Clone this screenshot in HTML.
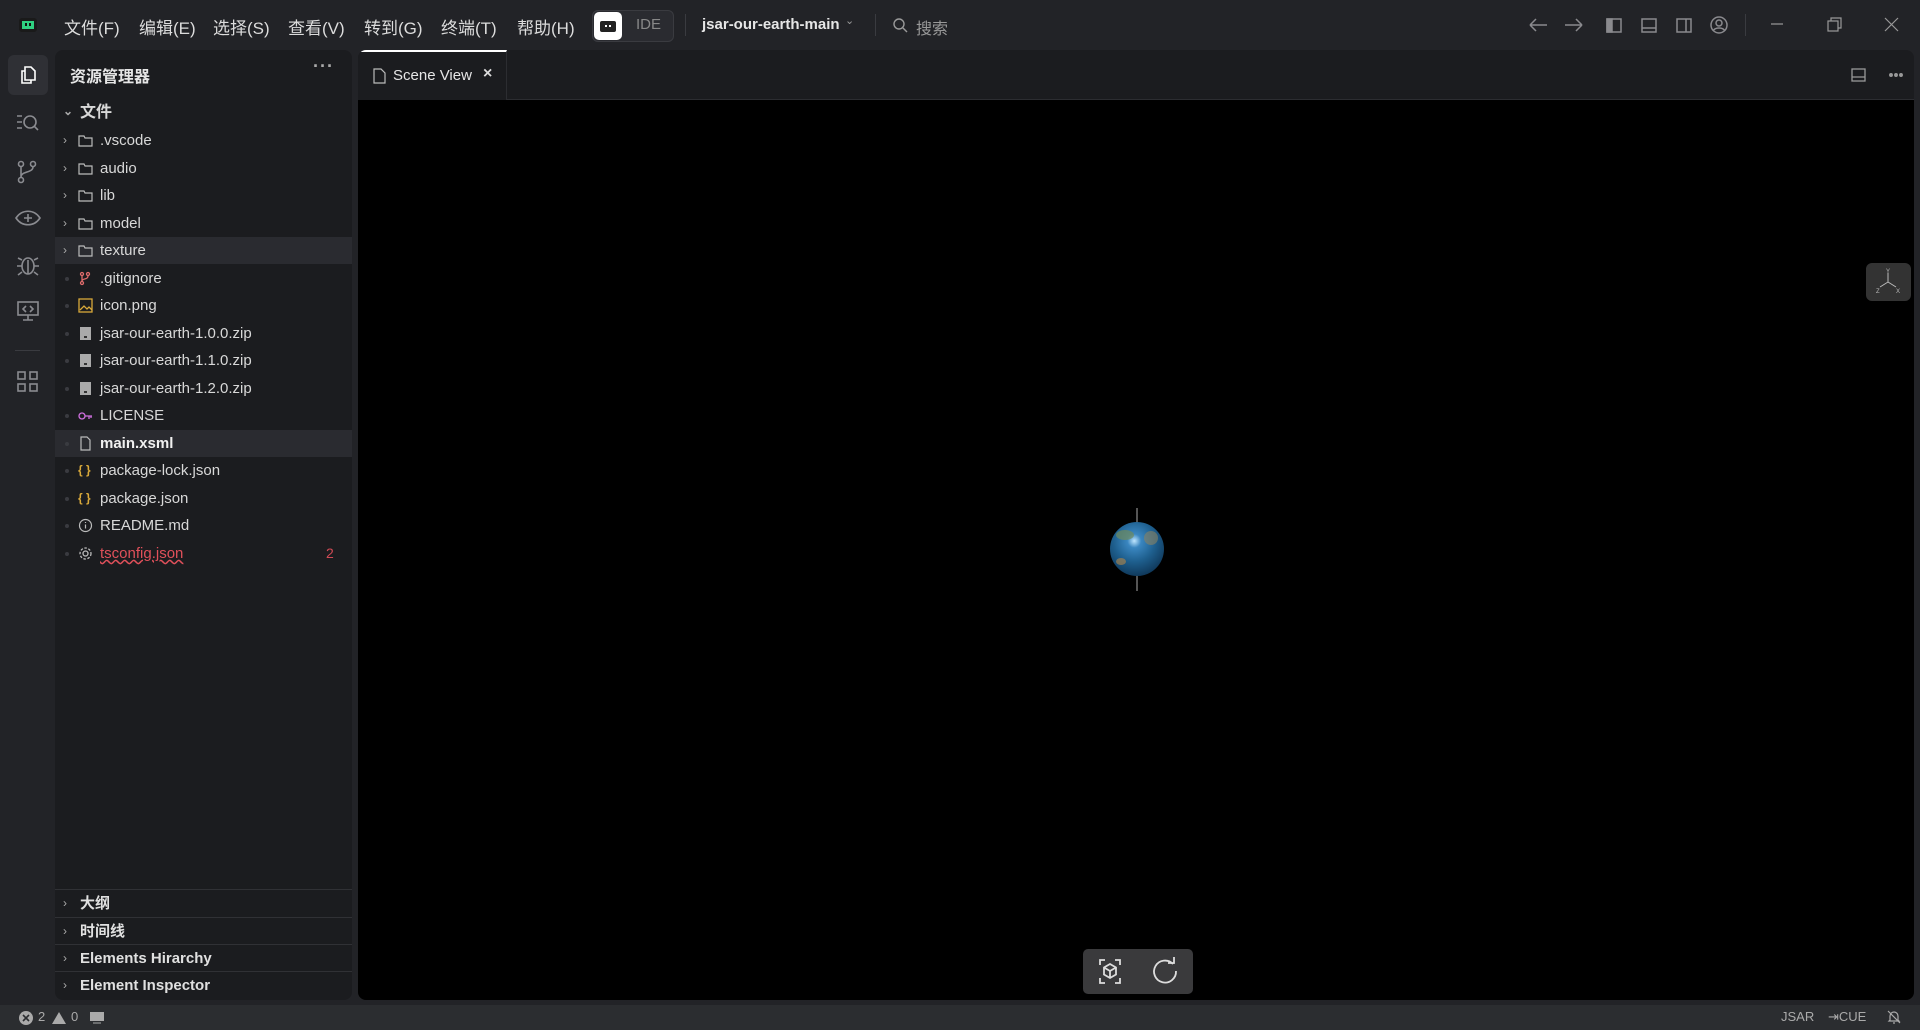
<!DOCTYPE html>
<html><head><meta charset="utf-8"><style>
*{box-sizing:border-box;margin:0;padding:0}
body{width:1920px;height:1030px;background:#222327;font-family:"Liberation Sans","Noto Sans CJK SC",sans-serif;color:#d4d4d4;position:relative;overflow:hidden}
.abs{position:absolute}
.menu{position:absolute;top:14px;font-size:17px;color:#dcdcdc}
#exp{left:55px;top:50px;width:297px;height:950px;background:#1b1c1f;border-radius:8px}
.row{position:absolute;left:0;width:297px;height:27px;font-size:15px;color:#d8d8d8;line-height:27px}
.row .ch{position:absolute;left:8px;color:#aaa;font-size:12px}
.row .dot{position:absolute;left:10px;top:12px;width:4px;height:4px;border-radius:2px;background:#3a3b40}
.row .ic{position:absolute;left:23px;top:6px;width:15px;height:15px}
.row .t{position:absolute;left:45px}
.sec{position:absolute;left:0;width:297px;height:28px;border-top:1px solid #303135;font-size:15px;font-weight:bold;color:#e0e0e0;line-height:27px}
.sec span{position:absolute;left:25px}
.sec i{position:absolute;left:8px;font-style:normal;color:#aaa;font-size:12px;font-weight:normal}
#ed{left:358px;top:50px;width:1556px;height:950px;background:#1b1c1f;border-radius:8px;overflow:hidden}
#canvas{position:absolute;left:0;top:50px;width:1556px;height:900px;background:#000}
</style></head><body>
<svg class="abs" style="left:18px;top:17px" width="20" height="16" viewBox="0 0 20 16"><rect x="1" y="1" width="18" height="14" rx="3" fill="#1a1a1a"/><rect x="4" y="4" width="12" height="8" fill="#2fd081"/><rect x="7" y="6" width="2" height="3" fill="#111"/><rect x="11" y="6" width="2" height="3" fill="#111"/></svg>
<div class="menu" style="left:64px">文件(F)</div>
<div class="menu" style="left:139px">编辑(E)</div>
<div class="menu" style="left:213px">选择(S)</div>
<div class="menu" style="left:288px">查看(V)</div>
<div class="menu" style="left:364px">转到(G)</div>
<div class="menu" style="left:441px">终端(T)</div>
<div class="menu" style="left:517px">帮助(H)</div>
<div class="abs" style="left:592px;top:10px;width:82px;height:32px;border:1px solid #3a3b40;border-radius:6px;background:#2a2b30"></div>
<div class="abs" style="left:594px;top:12px;width:28px;height:28px;background:#fff;border-radius:5px"></div>
<div class="abs" style="left:600px;top:21px;width:16px;height:11px;background:#222;border-radius:2px"></div>
<div class="abs" style="left:605px;top:25px;width:2px;height:2px;background:#fff"></div><div class="abs" style="left:609px;top:25px;width:2px;height:2px;background:#fff"></div>
<div class="menu" style="left:636px;top:16px;font-size:15px;color:#888">IDE</div>
<div class="abs" style="left:685px;top:14px;width:1px;height:22px;background:#3a3b40"></div>
<div class="menu" style="left:702px;top:16px;font-size:15px;font-weight:bold;color:#e6e6e6">jsar-our-earth-main</div>
<div class="menu" style="left:845px;top:14px;font-size:11px;color:#999">⌄</div>
<div class="abs" style="left:875px;top:14px;width:1px;height:22px;background:#3a3b40"></div>
<svg class="abs" style="left:892px;top:17px" width="16" height="16" viewBox="0 0 16 16" fill="none" stroke="#999" stroke-width="1.4"><circle cx="7" cy="7" r="5"/><path d="M11 11l4 4"/></svg>
<div class="menu" style="left:916px;top:15px;font-size:16px;color:#999">搜索</div>
<svg class="abs" style="left:1528px;top:15px" width="300" height="20" viewBox="0 0 300 20" fill="none" stroke="#8a8a8e" stroke-width="1.5">
<path d="M2 10h17M2 10l6-6M2 10l6 6"/><path d="M37 10h17M54 10l-6-6M54 10l-6 6"/>
<rect x="79" y="4" width="14" height="13"/><rect x="79" y="4" width="5" height="13" fill="#8a8a8e"/>
<rect x="114" y="4" width="14" height="13"/><path d="M114 13h14"/>
<rect x="149" y="4" width="14" height="13"/><path d="M158 4v13"/>
<circle cx="191" cy="10" r="8"/><circle cx="191" cy="8" r="3"/><path d="M185 16c2-4 10-4 12 0"/>
</svg>
<div class="abs" style="left:1745px;top:14px;width:1px;height:22px;background:#3a3b40"></div>
<svg class="abs" style="left:1770px;top:15px" width="140" height="20" viewBox="0 0 140 20" fill="none" stroke="#999" stroke-width="1.2">
<path d="M1 9h12"/><rect x="58" y="6" width="10" height="10"/><path d="M61 6V3h10v10h-3"/><path d="M115 3l13 13M128 3l-13 13"/></svg>

<div class="abs" style="left:8px;top:55px;width:40px;height:40px;background:#2f3035;border-radius:6px"></div>
<svg class="abs" style="left:18px;top:65px" width="20" height="20" viewBox="0 0 20 20" fill="none" stroke="#fff" stroke-width="1.6"><path d="M7 2h6l4 4v9H7z"/><path d="M7 6H4v12h9v-3"/></svg>
<svg class="abs" style="left:15px;top:110px" width="26" height="280" viewBox="0 0 26 280" fill="none" stroke="#8a8b90" stroke-width="1.6">
<path d="M2 6h5M2 12h5M2 18h5"/><circle cx="15" cy="12" r="6"/><path d="M19 16l4 4"/>
<circle cx="6" cy="54" r="2.5"/><circle cx="18" cy="54" r="2.5"/><circle cx="6" cy="70" r="2.5"/><path d="M6 57v10M18 57c0 6-12 4-12 10"/>
<path d="M1 108c6-9 18-9 24 0c-6 9-18 9-24 0z"/><path d="M13 104v8M9 108h8"/>
<ellipse cx="13" cy="156" rx="6" ry="8"/><path d="M7 150l-4-2M19 150l4-2M7 156H2M19 156h5M7 162l-4 3M19 162l4 3M13 150v14"/>
<rect x="3" y="192" width="20" height="13"/><path d="M8 210h10M13 205v5M11 196l-3 3 3 3M15 196l3 3-3 3"/>
</svg>
<div class="abs" style="left:15px;top:350px;width:25px;height:1px;background:#3a3b40"></div>
<svg class="abs" style="left:17px;top:371px" width="22" height="22" viewBox="0 0 22 22" fill="none" stroke="#8a8b90" stroke-width="1.6"><rect x="1" y="1" width="7" height="7"/><rect x="13" y="1" width="7" height="7"/><rect x="1" y="13" width="7" height="7"/><rect x="13" y="13" width="7" height="7"/></svg>

<div id="exp" class="abs">
<div class="abs" style="left:15px;top:13px;font-size:16px;font-weight:bold;color:#e6e6e6">资源管理器</div>
<div class="abs" style="left:258px;top:6px;font-size:18px;font-weight:bold;color:#aaa;letter-spacing:1px">···</div>
<div class="row" style="top:49px;font-weight:bold;font-size:16px"><span class="ch" style="top:-1px">⌄</span><span class="t" style="left:25px">文件</span></div>
<div class="row" style="top:77px"><span class="ch">›</span><svg class="ic" viewBox="0 0 15 15" fill="none" stroke="#bbb" stroke-width="1.2"><path d="M1 3h5l1 2h7v8H1z"/></svg><span class="t">.vscode</span></div>
<div class="row" style="top:105px"><span class="ch">›</span><svg class="ic" viewBox="0 0 15 15" fill="none" stroke="#bbb" stroke-width="1.2"><path d="M1 3h5l1 2h7v8H1z"/></svg><span class="t">audio</span></div>
<div class="row" style="top:132px"><span class="ch">›</span><svg class="ic" viewBox="0 0 15 15" fill="none" stroke="#bbb" stroke-width="1.2"><path d="M1 3h5l1 2h7v8H1z"/></svg><span class="t">lib</span></div>
<div class="row" style="top:160px"><span class="ch">›</span><svg class="ic" viewBox="0 0 15 15" fill="none" stroke="#bbb" stroke-width="1.2"><path d="M1 3h5l1 2h7v8H1z"/></svg><span class="t">model</span></div>
<div class="row" style="top:187px;background:#2a2b30"><span class="ch">›</span><svg class="ic" viewBox="0 0 15 15" fill="none" stroke="#bbb" stroke-width="1.2"><path d="M1 3h5l1 2h7v8H1z"/></svg><span class="t">texture</span></div>
<div class="row" style="top:215px"><span class="dot"></span><svg class="ic" viewBox="0 0 15 15" fill="none" stroke="#e06c6c" stroke-width="1.3"><circle cx="4" cy="3" r="1.5"/><circle cx="10" cy="3" r="1.5"/><circle cx="4" cy="12" r="1.5"/><path d="M4 5v5M10 5c0 4-6 2-6 5"/></svg><span class="t">.gitignore</span></div>
<div class="row" style="top:242px"><span class="dot"></span><svg class="ic" viewBox="0 0 15 15" fill="none" stroke="#d9a93a" stroke-width="1.3"><rect x="1" y="1" width="13" height="13"/><path d="M2 12l4-4 3 3 2-2 3 3"/></svg><span class="t">icon.png</span></div>
<div class="row" style="top:270px"><span class="dot"></span><svg class="ic" viewBox="0 0 15 15"><rect x="2" y="1" width="11" height="13" fill="#aaa"/><rect x="6" y="10" width="3" height="2" fill="#333"/></svg><span class="t">jsar-our-earth-1.0.0.zip</span></div>
<div class="row" style="top:297px"><span class="dot"></span><svg class="ic" viewBox="0 0 15 15"><rect x="2" y="1" width="11" height="13" fill="#aaa"/><rect x="6" y="10" width="3" height="2" fill="#333"/></svg><span class="t">jsar-our-earth-1.1.0.zip</span></div>
<div class="row" style="top:325px"><span class="dot"></span><svg class="ic" viewBox="0 0 15 15"><rect x="2" y="1" width="11" height="13" fill="#aaa"/><rect x="6" y="10" width="3" height="2" fill="#333"/></svg><span class="t">jsar-our-earth-1.2.0.zip</span></div>
<div class="row" style="top:352px"><span class="dot"></span><svg class="ic" viewBox="0 0 15 15" fill="none" stroke="#d070e0" stroke-width="1.3"><circle cx="4" cy="8" r="3"/><path d="M7 8h7M11 8v3M13 8v2"/></svg><span class="t">LICENSE</span></div>
<div class="row" style="top:380px;background:#2a2b30;font-weight:bold;color:#f0f0f0"><span class="dot"></span><svg class="ic" viewBox="0 0 15 15" fill="none" stroke="#bbb" stroke-width="1.2"><path d="M3 1h6l3 3v10H3z"/></svg><span class="t">main.xsml</span></div>
<div class="row" style="top:407px"><span class="dot"></span><span class="ic" style="color:#d9a93a;font-size:12px;line-height:15px;font-weight:bold">{ }</span><span class="t">package-lock.json</span></div>
<div class="row" style="top:435px"><span class="dot"></span><span class="ic" style="color:#d9a93a;font-size:12px;line-height:15px;font-weight:bold">{ }</span><span class="t">package.json</span></div>
<div class="row" style="top:462px"><span class="dot"></span><svg class="ic" viewBox="0 0 15 15" fill="none" stroke="#bbb" stroke-width="1.2"><circle cx="7.5" cy="7.5" r="6"/><path d="M7.5 6.5v4M7.5 4v1"/></svg><span class="t">README.md</span></div>
<div class="row" style="top:490px"><span class="dot"></span><svg class="ic" viewBox="0 0 15 15" fill="none" stroke="#bbb" stroke-width="1.3"><circle cx="7.5" cy="7.5" r="2.5"/><circle cx="7.5" cy="7.5" r="5.5" stroke-dasharray="2.5 1.6"/></svg><span class="t" style="color:#e0505a;text-decoration:underline wavy #e0505a">tsconfig.json</span><span style="position:absolute;left:271px;color:#d04a55;font-size:14px">2</span></div>
<div class="sec" style="top:839px"><i>›</i><span>大纲</span></div>
<div class="sec" style="top:867px"><i>›</i><span>时间线</span></div>
<div class="sec" style="top:894px"><i>›</i><span>Elements Hirarchy</span></div>
<div class="sec" style="top:921px"><i>›</i><span>Element Inspector</span></div>
</div>

<div id="ed" class="abs">
<div class="abs" style="left:0;top:0;width:149px;height:50px;background:#1b1c1f;border-top:2px solid #fff;border-right:1px solid #2c2d31"></div>
<svg class="abs" style="left:15px;top:18px" width="13" height="16" viewBox="0 0 13 16" fill="none" stroke="#bbb" stroke-width="1.2"><path d="M1 1h7l4 4v10H1z"/></svg>
<div class="abs" style="left:35px;top:17px;font-size:15px;color:#e6e6e6">Scene View</div>
<div class="abs" style="left:125px;top:15px;font-size:16px;font-weight:bold;color:#ddd">×</div>
<div class="abs" style="left:149px;top:49px;width:1407px;height:1px;background:#2c2d31"></div>
<svg class="abs" style="left:1493px;top:17px" width="60" height="16" viewBox="0 0 60 16" fill="none" stroke="#999" stroke-width="1.3"><rect x="1" y="2" width="13" height="12"/><path d="M1 10h13"/><circle cx="40" cy="8" r="1.3" fill="#999"/><circle cx="45" cy="8" r="1.3" fill="#999"/><circle cx="50" cy="8" r="1.3" fill="#999"/></svg>
<div id="canvas">
<div class="abs" style="left:778px;top:408px;width:2px;height:83px;background:#555"></div>
<div class="abs" style="left:752px;top:422px;width:54px;height:54px;border-radius:50%;background:radial-gradient(circle at 45% 35%,#bfe6ff 0,#3a86c0 15%,#1e5f8e 45%,#0e3556 80%,#082338 100%)"></div>
<div class="abs" style="left:758px;top:430px;width:18px;height:10px;border-radius:50%;background:#6f8a5c;opacity:.7"></div>
<div class="abs" style="left:786px;top:431px;width:14px;height:14px;border-radius:50%;background:#8a8260;opacity:.6"></div>
<div class="abs" style="left:758px;top:458px;width:10px;height:7px;border-radius:50%;background:#a08050;opacity:.7"></div>
<div class="abs" style="left:1508px;top:163px;width:45px;height:38px;background:#333;border-radius:6px"></div>
<svg class="abs" style="left:1508px;top:163px" width="45" height="38" viewBox="0 0 45 38" fill="none" stroke="#bbb" stroke-width="1"><path d="M22 10v9M22 19l-8 5M22 19l8 5"/><text x="20" y="10" font-size="6" fill="#bbb" stroke="none" font-family="Liberation Sans">Y</text><text x="10" y="30" font-size="6" fill="#bbb" stroke="none" font-family="Liberation Sans">Z</text><text x="30" y="30" font-size="6" fill="#bbb" stroke="none" font-family="Liberation Sans">X</text></svg>
<div class="abs" style="left:725px;top:849px;width:110px;height:45px;background:#3a3a3c;border-radius:5px"></div>
<svg class="abs" style="left:739px;top:856px" width="90" height="32" viewBox="0 0 90 32" fill="none" stroke="#ddd" stroke-width="1.8"><path d="M3 9V4h5M18 4h5v5M23 22v5h-5M8 27H3v-5"/><path d="M13 8l6 3.5v7L13 22l-6-3.5v-7z M7 11.5l6 3.5 6-3.5M13 15v7"/><path d="M76 8a11 11 0 1 0 3 7"/><path d="M71 7h6V1"/></svg>
</div>
</div>

<div class="abs" style="left:0;top:1005px;width:1920px;height:25px;background:#2b2d30"></div>
<svg class="abs" style="left:18px;top:1010px" width="90" height="16" viewBox="0 0 90 16"><circle cx="8" cy="8" r="7" fill="#aaa"/><path d="M5 5l6 6M11 5l-6 6" stroke="#2b2d30" stroke-width="1.6"/><path d="M41 2l7 12H34z" fill="#aaa"/><rect x="72" y="2" width="14" height="9" fill="#aaa"/><path d="M75 13h8" stroke="#aaa"/></svg>
<div class="abs" style="left:38px;top:1009px;font-size:13px;color:#aaa">2</div>
<div class="abs" style="left:71px;top:1009px;font-size:13px;color:#aaa">0</div>
<div class="abs" style="left:1781px;top:1009px;font-size:13px;color:#aaa">JSAR</div>
<div class="abs" style="left:1828px;top:1009px;font-size:13px;color:#aaa">⇥CUE</div>
<svg class="abs" style="left:1886px;top:1009px" width="16" height="16" viewBox="0 0 16 16" fill="none" stroke="#aaa" stroke-width="1.2"><path d="M4 11V7a4 4 0 0 1 8 0v4l1 1H3z M7 14h2M2 2l12 12"/></svg>
</body></html>
